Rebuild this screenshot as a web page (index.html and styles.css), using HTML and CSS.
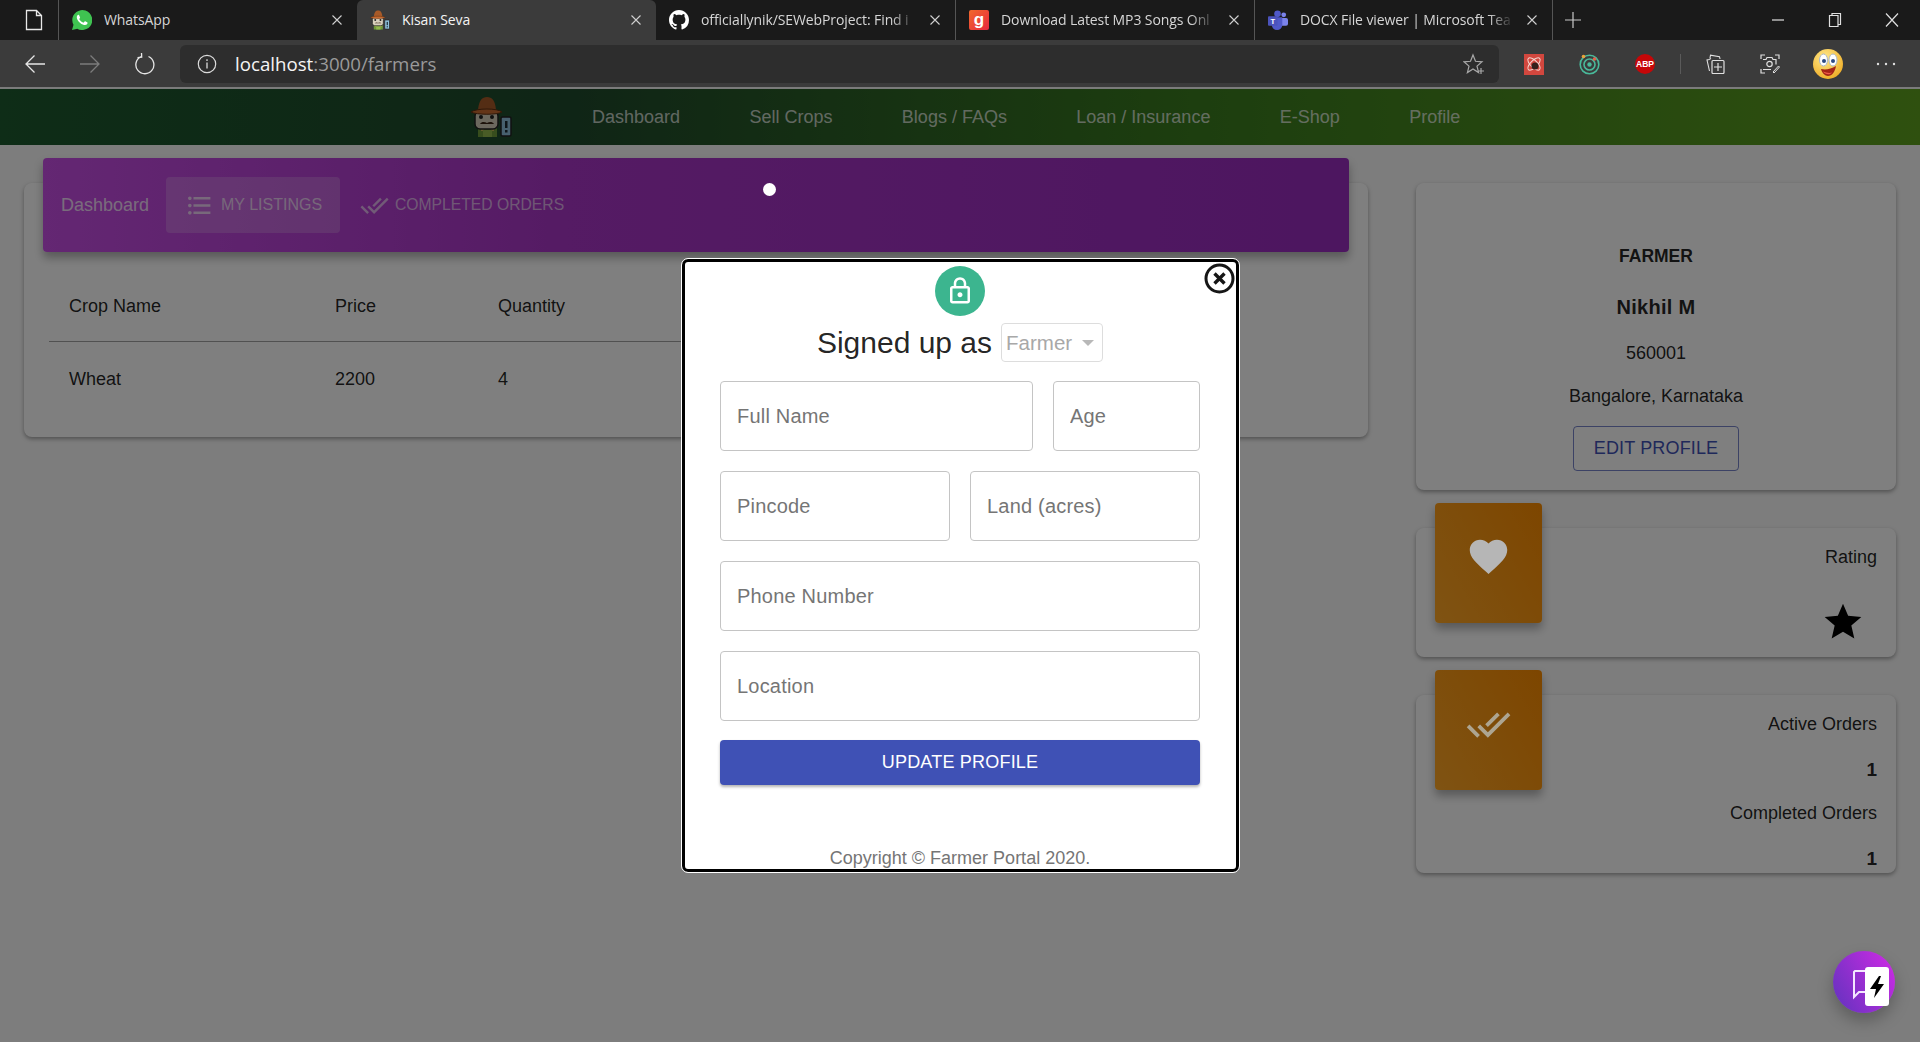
FILE: index.html
```html
<!DOCTYPE html>
<html lang="en">
<head>
    <meta charset="UTF-8">
    <meta name="viewport" content="width=device-width, initial-scale=1.0">
    <title>Kisan Seva</title>
    <link rel="stylesheet" href="styles.css">
</head>
<body>
    <svg class="defs" width="0" height="0">
        <symbol id="farmer" viewBox="0 0 42 40">
            <rect x="8" y="29" width="19" height="11" fill="#6f9a3a"/>
            <rect x="11" y="30" width="3" height="4" fill="#c9b458"/>
            <rect x="21" y="30" width="3" height="4" fill="#c9b458"/>
            <rect x="13" y="33" width="9" height="7" fill="#93b84d"/>
            <rect x="5" y="14" width="23" height="18" rx="5" fill="#d8d0bd" stroke="#222" stroke-width="1.5"/>
            <circle cx="11" cy="20" r="2" fill="#222"/>
            <circle cx="22" cy="20" r="2" fill="#222"/>
            <path d="M10 27c2-3 5-2 7-1 2-1 5-2 7 1z" fill="#3a2414"/>
            <path d="M8 13C9 3 12 0 17 0s8 3 9 13z" fill="#a85a28"/>
            <path d="M1 15c5-4 27-4 31 0-4 3-26 3-31 0z" fill="#c86a30" stroke="#5c2f12"/>
            <rect x="31" y="20" width="10" height="19" rx="1.5" fill="#8fc1dc" stroke="#222" stroke-width="1.5"/>
            <rect x="35" y="24" width="2.5" height="7" fill="#1c2a33"/>
            <rect x="35" y="33" width="2.5" height="2.5" fill="#1c2a33"/>
        </symbol>
        <symbol id="close-x" viewBox="0 0 12 12">
            <path d="M1.5 1.5l9 9M10.5 1.5l-9 9" stroke="#d0d0d0" stroke-width="1.1" fill="none"/>
        </symbol>
        <symbol id="done-all" viewBox="0 0 24 24">
            <path d="M18 7l-1.41-1.41-6.34 6.34 1.41 1.41L18 7zm4.24-1.41L11.66 16.17 7.48 12l-1.41 1.41L11.66 19l12-12-1.42-1.41zM.41 13.41L6 19l1.41-1.41L1.83 12 .41 13.41z"/>
        </symbol>
    </svg>

    <div class="tabstrip">
        <div class="tab-actions">
            <svg width="18" height="22" viewBox="0 0 18 22"><path d="M1.5 1.5h10l5 5v14h-15zM11.5 1.5v5h5" fill="none" stroke="#e8e8e8" stroke-width="1.3"/></svg>
        </div>
        <div class="tab tab-first">
            <svg class="favicon" viewBox="0 0 20 20">
                <path d="M0 20l1.5-5.2A10 10 0 1 1 5.3 18.7z" fill="#3fc351"/>
                <path d="M6.6 4.8c-.4 0-1 .2-1.3.8-.6 1-.8 2.500.3 4.300 1.200 1.900 3 3.900 5.700 4.900 1.800.6 3.200.2 3.900-.8.400-.6.400-1.300.3-1.500l-2.200-1.200c-.3-.1-.5 0-.7.2l-.8 1c-.2.200-.4.200-.7.100-1.500-.6-3-1.900-3.800-3.300-.1-.3-.1-.4.100-.6l.6-.8c.1-.2.100-.4 0-.6l-1-2.300c-.1-.2-.3-.2-.4-.2z" fill="#fff"/>
            </svg>
            <span class="tab-title">WhatsApp</span>
            <svg class="tab-close"><use href="#close-x"/></svg>
        </div>
        <div class="tab tab-active">
            <svg class="favicon"><use href="#farmer"/></svg>
            <span class="tab-title">Kisan Seva</span>
            <svg class="tab-close"><use href="#close-x"/></svg>
        </div>
        <div class="tab">
            <svg class="favicon" viewBox="0 0 16 16"><path fill="#fff" d="M8 0C3.58 0 0 3.58 0 8c0 3.54 2.29 6.53 5.47 7.59.4.07.55-.17.55-.38 0-.19-.01-.82-.01-1.49-2.01.37-2.53-.49-2.69-.94-.09-.23-.48-.94-.82-1.13-.28-.15-.68-.52-.01-.53.63-.01 1.08.58 1.23.82.72 1.21 1.87.87 2.33.66.07-.52.28-.87.51-1.07-1.78-.2-3.64-.89-3.64-3.95 0-.87.31-1.59.82-2.15-.08-.2-.36-1.02.08-2.12 0 0 .67-.21 2.2.82.64-.18 1.32-.27 2-.27.68 0 1.36.09 2 .27 1.53-1.04 2.2-.82 2.2-.82.44 1.1.16 1.92.08 2.12.51.56.82 1.27.82 2.15 0 3.07-1.87 3.75-3.65 3.95.29.25.54.73.54 1.48 0 1.07-.01 1.93-.01 2.2 0 .21.15.46.55.38A8.013 8.013 0 0016 8c0-4.42-3.58-8-8-8z"/></svg>
            <span class="tab-title tab-fade">officiallynik/SEWebProject: Find i</span>
            <svg class="tab-close"><use href="#close-x"/></svg>
        </div>
        <div class="tab">
            <svg class="favicon" viewBox="0 0 20 20">
                <defs><linearGradient id="gaana" x1="0" y1="0" x2="1" y2="1"><stop offset="0" stop-color="#f0692c"/><stop offset="1" stop-color="#e8273f"/></linearGradient></defs>
                <rect width="20" height="20" rx="2" fill="url(#gaana)"/>
                <text x="10" y="15" text-anchor="middle" class="favicon-letter" fill="#fff">g</text>
            </svg>
            <span class="tab-title tab-fade">Download Latest MP3 Songs Onl</span>
            <svg class="tab-close"><use href="#close-x"/></svg>
        </div>
        <div class="tab tab-last">
            <svg class="favicon" viewBox="0 0 21 20">
                <circle cx="16.500" cy="4.500" r="2.500" fill="#7b83eb"/>
                <rect x="12" y="8" width="9" height="8" rx="2" fill="#7b83eb"/>
                <circle cx="10" cy="3.500" r="3.500" fill="#5059c9"/>
                <path d="M4 7h11v8a5 5 0 0 1-11 0z" fill="#5059c9"/>
                <rect x="0" y="6" width="10" height="10" rx="1" fill="#4b53bc"/>
                <text x="5" y="14" text-anchor="middle" class="favicon-t" fill="#fff">T</text>
            </svg>
            <span class="tab-title tab-fade">DOCX File viewer | Microsoft Tea</span>
            <svg class="tab-close"><use href="#close-x"/></svg>
        </div>
        <div class="new-tab">
            <svg width="18" height="18" viewBox="0 0 18 18"><path d="M9 1v16M1 9h16" stroke="#c8c8c8" stroke-width="1.2"/></svg>
        </div>
        <div class="window-btns">
            <svg width="14" height="14" viewBox="0 0 14 14"><path d="M1 7h12" stroke="#e0e0e0" stroke-width="1.2"/></svg>
            <svg width="14" height="16" viewBox="0 0 14 16"><path d="M1.500 3.500h8.500v11h-8.500zM4 3.500v-2h8.500v11h-2.500" fill="none" stroke="#e0e0e0" stroke-width="1.200"/></svg>
            <svg width="14" height="16" viewBox="0 0 14 16"><path d="M1 1.500l12 13M13 1.500l-12 13" stroke="#e0e0e0" stroke-width="1.200"/></svg>
        </div>
    </div>

    <div class="toolbar">
        <div class="nav-btns">
            <svg width="20" height="20" viewBox="0 0 20 20"><path d="M20 10H1M9.500 1.500L1 10l8.500 8.500" fill="none" stroke="#e6e6e6" stroke-width="1.300"/></svg>
            <svg width="20" height="20" viewBox="0 0 20 20"><path d="M0 10h19M10.500 1.500L19 10l-8.500 8.500" fill="none" stroke="#7c7c7c" stroke-width="1.300"/></svg>
            <svg width="20" height="22" viewBox="0 0 20 22"><path d="M13.500 3.500A9 9 0 1 1 6 3.600M6.500 0l.2 4.200-4.200.4" fill="none" stroke="#e6e6e6" stroke-width="1.300"/></svg>
        </div>
        <div class="addressbar">
            <svg width="20" height="20" viewBox="0 0 20 20"><circle cx="10" cy="10" r="8.700" fill="none" stroke="#dcdcdc" stroke-width="1.200"/><path d="M10 8.500v6M10 5.300v1.600" stroke="#dcdcdc" stroke-width="1.300"/></svg>
            <span class="url"><span class="url-host">localhost</span>:3000/farmers</span>
            <svg class="fav-star" width="22" height="22" viewBox="0 0 22 22"><path d="M10 2l2.500 6.300 6.500.5-5 4.300 1.600 6.500L10 16l-5.600 3.600L6 13.100 1 8.800l6.500-.5z" fill="none" stroke="#a8a8a8" stroke-width="1.200"/><path d="M18 15v6M15 18h6" stroke="#a8a8a8" stroke-width="1.200"/></svg>
        </div>
        <div class="extensions">
            <svg width="20" height="21" viewBox="0 0 20 21"><rect width="20" height="21" fill="#d2473e"/><ellipse cx="10" cy="10" rx="8" ry="3.500" fill="none" stroke="#f4d6d0" transform="rotate(45 10 10)"/><ellipse cx="10" cy="10" rx="8" ry="3.500" fill="none" stroke="#f4d6d0" transform="rotate(-45 10 10)"/><circle cx="11" cy="12" r="3.500" fill="#33201c"/></svg>
            <svg width="21" height="21" viewBox="0 0 21 21"><circle cx="10.500" cy="10.500" r="9.300" fill="none" stroke="#49b99a" stroke-width="1.600"/><circle cx="10.500" cy="10.500" r="5.500" fill="none" stroke="#49b99a" stroke-width="1.600"/><circle cx="10.500" cy="10.500" r="2.200" fill="#49b99a"/><circle cx="4.500" cy="2.500" r="1.800" fill="#e9a23b"/><circle cx="15.500" cy="5" r="1.800" fill="#e2604a"/></svg>
            <svg width="20" height="20" viewBox="0 0 20 20"><circle cx="10" cy="10" r="10" fill="#c60708"/><text x="10" y="13.300" text-anchor="middle" class="abp-text" fill="#fff">ABP</text></svg>
            <span class="ext-sep"></span>
            <svg width="19" height="20" viewBox="0 0 19 20"><path d="M5 4.500L3 5.500 1 6l2.500 11" fill="none" stroke="#e0e0e0" stroke-width="1.100"/><path d="M4 4l.5-2.800 9 1.500.5 2.300" fill="none" stroke="#e0e0e0" stroke-width="1.100"/><rect x="6" y="6.500" width="12" height="13" rx="1" fill="none" stroke="#e0e0e0" stroke-width="1.200"/><path d="M12 9v8M8 13h8" stroke="#e0e0e0" stroke-width="1.200"/></svg>
            <svg width="20" height="20" viewBox="0 0 20 20"><path d="M1 5V1h4M15 1h4v4M1 15v4h4" fill="none" stroke="#e0e0e0" stroke-width="1.200"/><path d="M3 5.500h3l1-2h5l1 2h3v5M11 15.500H3z" fill="none" stroke="#e0e0e0" stroke-width="1.200"/><circle cx="9.500" cy="10" r="2.700" fill="none" stroke="#e0e0e0" stroke-width="1.200"/><path d="M13 18l5.500-6 1 1-5.500 6z" fill="none" stroke="#e0e0e0" stroke-width="1"/></svg>
            <svg class="avatar-emoji" width="30" height="30" viewBox="0 0 30 30">
                <defs><radialGradient id="emoji" cx=".4" cy=".3" r=".8"><stop offset="0" stop-color="#ffe98a"/><stop offset="1" stop-color="#eda81e"/></radialGradient></defs>
                <circle cx="15" cy="15" r="15" fill="url(#emoji)"/>
                <ellipse cx="10.500" cy="11" rx="4" ry="6" fill="#fff" stroke="#a9b6c8"/>
                <ellipse cx="20" cy="11" rx="4" ry="6" fill="#fff" stroke="#a9b6c8"/>
                <circle cx="11" cy="12" r="2" fill="#2c4a84"/>
                <circle cx="20" cy="12" r="2" fill="#2c4a84"/>
                <path d="M8 20c5 1 10 0 15-3-1 6-4 10-8 10-3 0-6-3-7-7z" fill="#a42416"/>
                <path d="M10 22.500c2 3 7 4 9 1-3 1-6 0-9-1z" fill="#f05a4a"/>
            </svg>
            <svg width="20" height="4" viewBox="0 0 20 4"><circle cx="2" cy="2" r="1.200" fill="#e0e0e0"/><circle cx="10" cy="2" r="1.200" fill="#e0e0e0"/><circle cx="18" cy="2" r="1.200" fill="#e0e0e0"/></svg>
        </div>
    </div>

    <div class="page">
        <nav class="navbar">
            <svg class="nav-logo"><use href="#farmer"/></svg>
            <a>Dashboard</a>
            <a>Sell Crops</a>
            <a>Blogs / FAQs</a>
            <a>Loan / Insurance</a>
            <a>E-Shop</a>
            <a>Profile</a>
        </nav>

        <main class="content">
            <section class="card listings">
                <div class="appbar">
                    <span class="appbar-title">Dashboard</span>
                    <div class="appbar-tab appbar-tab-on">
                        <svg class="tab-icon" viewBox="0 0 24 24"><path d="M4 10.500c-.83 0-1.500.67-1.500 1.500s.67 1.500 1.500 1.500 1.500-.67 1.500-1.500-.67-1.500-1.500-1.500zm0-6c-.83 0-1.500.67-1.500 1.500S3.170 7.500 4 7.500 5.500 6.830 5.500 6 4.830 4.500 4 4.500zm0 12c-.83 0-1.500.68-1.500 1.500s.68 1.500 1.500 1.500 1.500-.68 1.500-1.500-.67-1.500-1.500-1.500zM7 19h14v-2H7v2zm0-6h14v-2H7v2zm0-8v2h14V5H7z"/></svg>
                        My Listings
                    </div>
                    <div class="appbar-tab">
                        <svg class="tab-icon"><use href="#done-all"/></svg>
                        Completed Orders
                    </div>
                </div>
                <table class="crops">
                    <thead>
                        <tr><th class="col-name">Crop Name</th><th class="col-price">Price</th><th>Quantity</th></tr>
                    </thead>
                    <tbody>
                        <tr><td>Wheat</td><td>2200</td><td>4</td></tr>
                    </tbody>
                </table>
            </section>

            <aside class="sidebar">
                <section class="card profile">
                    <h4 class="profile-role">FARMER</h4>
                    <h3 class="profile-name">Nikhil M</h3>
                    <p class="profile-line pin">560001</p>
                    <p class="profile-line place">Bangalore, Karnataka</p>
                    <button class="btn-outline">EDIT PROFILE</button>
                </section>
                <section class="card stat rating">
                    <div class="stat-box">
                        <svg class="heart" viewBox="0 0 24 24"><path d="M12 21.350l-1.450-1.320C5.400 15.360 2 12.280 2 8.500 2 5.420 4.420 3 7.500 3c1.740 0 3.410.81 4.500 2.090C13.090 3.810 14.760 3 16.500 3 19.580 3 22 5.420 22 8.500c0 3.780-3.400 6.860-8.550 11.540L12 21.350z"/></svg>
                    </div>
                    <p class="stat-label">Rating</p>
                    <svg class="star" viewBox="0 0 24 24"><polygon points="12,17.270 18.180,21 16.540,13.970 22,9.240 14.810,8.630 12,2 9.190,8.630 2,9.240 7.460,13.970 5.820,21"/></svg>
                </section>
                <section class="card stat orders">
                    <div class="stat-box">
                        <svg class="check"><use href="#done-all"/></svg>
                    </div>
                    <p class="stat-label">Active Orders</p>
                    <p class="stat-num">1</p>
                    <p class="stat-label stat-label-next">Completed Orders</p>
                    <p class="stat-num">1</p>
                </section>
            </aside>
        </main>

        <div class="overlay"></div>
        <div class="cursor-dot"></div>

        <div class="modal">
            <svg class="modal-close" viewBox="0 0 31 31"><circle cx="15.500" cy="15.500" r="13.500" fill="#fff" stroke="#161616" stroke-width="3"/><path d="M10.500 10.500l10 10M20.500 10.500l-10 10" stroke="#161616" stroke-width="3.400"/></svg>
            <div class="lock-avatar">
                <svg class="lock" viewBox="0 0 24 24"><path d="M18 8h-1V6c0-2.760-2.240-5-5-5S7 3.240 7 6v2H6c-1.100 0-2 .9-2 2v10c0 1.100.9 2 2 2h12c1.100 0 2-.9 2-2V10c0-1.100-.9-2-2-2zM9 6c0-1.660 1.340-3 3-3s3 1.340 3 3v2H9V6zm9 14H6V10h12v10zm-6-3c1.100 0 2-.9 2-2s-.9-2-2-2-2 .9-2 2 .9 2 2 2z"/></svg>
            </div>
            <div class="modal-title">
                <h2>Signed up as</h2>
                <div class="role-select">Farmer<span class="caret"></span></div>
            </div>
            <form class="signup">
                <div class="form-row row-name">
                    <input type="text" placeholder="Full Name">
                    <input type="text" placeholder="Age">
                </div>
                <div class="form-row row-even">
                    <input type="text" placeholder="Pincode">
                    <input type="text" placeholder="Land (acres)">
                </div>
                <input type="text" placeholder="Phone Number">
                <input type="text" placeholder="Location">
                <button type="button" class="btn-primary">UPDATE PROFILE</button>
            </form>
            <p class="copyright">Copyright © Farmer Portal 2020.</p>
        </div>

        <div class="fab">
            <svg width="62" height="62" viewBox="0 0 62 62">
                <path d="M22 20h16v21H26l-5 5V21z" fill="none" stroke="#f4e6ff" stroke-width="2"/>
                <rect x="32" y="16" width="24" height="39" rx="3" fill="#fff"/>
                <polygon points="46,25 37,38 43,38 41,47 51,33 45,33 48,25" fill="#000"/>
            </svg>
        </div>
    </div>
</body>
</html>
```

FILE: styles.css
```css
* {
    box-sizing: border-box;
}
html, body {
    margin: 0;
    height: 1042px;
    overflow: hidden;
}
body {
    font-family: "Liberation Sans", Arial, sans-serif;
    background-color: #1a1a1a;
}
.defs {
    display: block;
    height: 0;
}

/* browser chrome */
.tabstrip {
    display: flex;
    align-items: stretch;
    height: 40px;
    background-color: #1a1a1a;
    font-family: "Open Sans", sans-serif;
    font-size: 14px;
    letter-spacing: -0.1px;
    color: #d6d6d6;
}
.tab-actions {
    display: flex;
    align-items: center;
    width: 58px;
    padding-left: 25px;
}
.tab {
    display: flex;
    align-items: center;
    width: 299px;
    padding: 0 14px 0 13px;
    border-left: 1px solid #555;
    background-clip: padding-box;
}
.tab-first {
    border-left: 1px solid #555;
}
.tab-active {
    background-color: #3b3b3b;
    border-left: 0;
    border-radius: 6px 6px 0 0;
    color: #f4f4f4;
}
.tab-active + .tab {
    border-left: 0;
}
.tab-last {
    border-right: 1px solid #555;
}
.favicon {
    flex: none;
    width: 20px;
    height: 20px;
    margin-right: 12px;
}
.favicon-letter {
    font: bold 17px "Liberation Sans", sans-serif;
}
.favicon-t {
    font: bold 8px "Liberation Sans", sans-serif;
}
.tab-title {
    flex: 1;
    margin-bottom: 2px;
    overflow: hidden;
    white-space: nowrap;
}
.tab-fade {
    -webkit-mask-image: linear-gradient(90deg, #000 88%, transparent 100%);
    mask-image: linear-gradient(90deg, #000 88%, transparent 100%);
}
.tab-close {
    flex: none;
    width: 12px;
    height: 12px;
    margin-left: 12px;
}
.new-tab {
    display: flex;
    align-items: center;
    padding-left: 11px;
}
.window-btns {
    display: flex;
    align-items: center;
    gap: 43px;
    margin-left: auto;
    padding-right: 21px;
}

.toolbar {
    display: flex;
    align-items: center;
    height: 47px;
    padding-top: 5px;
    padding-bottom: 4px;
    background-color: #3b3b3b;
}
.nav-btns {
    display: flex;
    align-items: center;
    gap: 35px;
    width: 180px;
    padding-left: 25px;
}
.addressbar {
    display: flex;
    align-items: center;
    width: 1319px;
    height: 38px;
    padding: 0 14px 0 17px;
    border-radius: 6px;
    background-color: #2d2d2d;
}
.url {
    margin-left: 18px;
    margin-bottom: 2px;
    font-family: "Open Sans", sans-serif;
    font-size: 18.700px;
    color: #9a9a9a;
}
.url-host {
    color: #f5f5f5;
}
.fav-star {
    margin-left: auto;
}
.extensions {
    display: flex;
    align-items: center;
    gap: 35px;
    padding-left: 25px;
}
.ext-sep {
    width: 1px;
    height: 20px;
    margin: 0 -10px 0 -10px;
    background-color: #5a5a5a;
}
.avatar-emoji {
    margin: 0 -2px;
}
.abp-text {
    font: bold 8.500px "Liberation Sans", sans-serif;
}

/* page */
.page {
    position: relative;
    height: 955px;
    border-top: 2px solid #7b7b7b;
    background-color: #fafafa;
}
.navbar {
    display: flex;
    align-items: center;
    gap: 69.400px;
    height: 56px;
    padding-left: 470px;
    background: linear-gradient(90deg, #1c5a2e 0%, #1f4a2c 30%, #3a7c1e 62%, #5ea11e 100%);
    font-size: 18px;
    color: rgba(255, 255, 255, 0.74);
}
.nav-logo {
    width: 42px;
    height: 40px;
    margin-right: 10.600px;
}
.content {
    display: grid;
    grid-template-columns: 1344px 480px;
    gap: 48px;
    align-items: start;
    padding: 38px 24px 0;
}
.card {
    position: relative;
    border-radius: 8px;
    background-color: #fff;
    box-shadow: 0 2px 4px rgba(0, 0, 0, 0.35);
    color: rgba(0, 0, 0, 0.87);
}
.listings {
    height: 254px;
}
.appbar {
    display: flex;
    align-items: center;
    height: 94px;
    margin: 0 19px;
    padding-left: 18px;
    position: relative;
    top: -25px;
    border-radius: 4px;
    background: linear-gradient(90deg, #c84ee6 0%, #aa36c8 40%, #9a2cc0 100%);
    box-shadow: 0 6px 10px rgba(0, 0, 0, 0.3);
    font-size: 18px;
    color: rgba(255, 255, 255, 0.8);
}
.appbar-title {
    width: 105px;
}
.appbar-tab {
    display: flex;
    align-items: center;
    height: 56px;
    padding: 0 0 0 20px;
    border-radius: 4px;
    font-size: 15.700px;
    white-space: nowrap;
    text-transform: uppercase;
    color: rgba(255, 255, 255, 0.62);
    fill: rgba(255, 255, 255, 0.62);
}
.appbar-tab-on {
    width: 174px;
    padding-left: 19px;
    background-color: rgba(255, 255, 255, 0.2);
    font-size: 16px;
    color: rgba(255, 255, 255, 0.7);
    fill: rgba(255, 255, 255, 0.7);
}
.appbar-tab-on .tab-icon {
    margin-right: 7px;
}
.tab-icon {
    width: 29px;
    height: 29px;
    margin-right: 6px;
    flex: none;
}
.crops {
    position: relative;
    top: -5px;
    width: 1100px;
    margin: 0 25px;
    border-collapse: collapse;
    table-layout: fixed;
    font-size: 18px;
}
.crops th, .crops td {
    padding: 0 0 0 20px;
    font-weight: normal;
    text-align: left;
}
.crops th {
    height: 69px;
    padding-top: 1px;
    border-bottom: 1px solid rgba(0, 0, 0, 0.2);
}
.crops td {
    height: 77px;
}
.col-name {
    width: 266px;
}
.col-price {
    width: 163px;
}

.sidebar {
    display: flex;
    flex-direction: column;
    gap: 38px;
}
.profile {
    padding: 61px 0 19px;
    text-align: center;
}
.profile-role {
    margin: 0;
    font-size: 17.500px;
    line-height: 24px;
}
.profile-name {
    margin: 25px 0 0;
    font-size: 20px;
    line-height: 28px;
    letter-spacing: 0.3px;
}
.profile-line {
    margin: 0;
    font-size: 18px;
    line-height: 24px;
}
.pin {
    margin-top: 20px;
}
.place {
    margin-top: 19px;
}
.btn-outline {
    display: block;
    width: 166px;
    height: 45px;
    margin: 18px auto 0;
    border: 1px solid rgba(63, 81, 181, 0.7);
    border-radius: 4px;
    background: none;
    font: 18px "Liberation Sans", sans-serif;
    letter-spacing: 0.15px;
    color: #3f51b5;
}
.stat {
    display: flex;
    flex-direction: column;
    align-items: flex-end;
    padding-right: 19px;
    font-size: 18px;
}
.stat p {
    margin: 0;
    line-height: 24px;
}
.stat-box {
    position: absolute;
    left: 19px;
    top: -25px;
    display: flex;
    justify-content: center;
    width: 107px;
    height: 120px;
    border-radius: 4px;
    background: linear-gradient(60deg, #ffa726, #fb8c00);
    box-shadow: 0 6px 10px rgba(0, 0, 0, 0.3);
}
/* these two show lighter than the backdrop allows, so they sit above it */
.heart, .check {
    position: relative;
    z-index: 1;
    width: 45px;
    height: 45px;
    margin-top: 31px;
}
.heart {
    fill: #b6b6b6;
}
.check {
    margin-top: 32px;
    fill: #ada591;
}
.rating {
    padding-top: 17px;
    padding-bottom: 13px;
}
.star {
    width: 44px;
    height: 44px;
    margin: 31px 12px 0 0;
}
.orders {
    padding-top: 17px;
    padding-bottom: 2px;
}
.stat .stat-num {
    margin-top: 22px;
    font-size: 19px;
    font-weight: bold;
}
.stat .stat-label-next {
    margin-top: 19px;
}

/* dimmed backdrop and dialog */
.overlay {
    position: absolute;
    inset: 0;
    background-color: rgba(0, 0, 0, 0.5);
}
.cursor-dot {
    position: absolute;
    left: 763px;
    top: 94px;
    width: 13px;
    height: 13px;
    border-radius: 50%;
    background-color: #fff;
}
.modal {
    position: absolute;
    left: 682px;
    top: 170px;
    width: 557px;
    height: 613px;
    padding: 4px 36px 0 35px;
    overflow: hidden;
    border: 3px solid #000;
    border-radius: 6px;
    outline: 1px solid #fff;
    background-color: #fff;
}
.modal-close {
    position: absolute;
    right: 1px;
    top: 1px;
    width: 31px;
    height: 31px;
}
.lock-avatar {
    display: flex;
    align-items: center;
    justify-content: center;
    width: 50px;
    height: 50px;
    margin: 0 auto;
    border-radius: 50%;
    background-color: #3cb58f;
}
.lock {
    width: 30px;
    height: 30px;
    fill: #fff;
}
.modal-title {
    display: flex;
    align-items: center;
    justify-content: center;
    gap: 9px;
    height: 39px;
    margin-top: 7px;
}
.modal-title h2 {
    margin: 0;
    font-size: 30px;
    font-weight: normal;
    color: rgba(0, 0, 0, 0.87);
}
.role-select {
    display: flex;
    align-items: center;
    width: 102px;
    height: 39px;
    padding-left: 4px;
    border: 1px solid #ddd;
    border-radius: 4px;
    font-size: 20.500px;
    color: #a8a8a8;
}
.caret {
    width: 0;
    height: 0;
    margin-left: 10px;
    border-top: 6px solid #b8b8b8;
    border-left: 6px solid transparent;
    border-right: 6px solid transparent;
}
.signup {
    display: flex;
    flex-direction: column;
    gap: 20px;
    margin-top: 19px;
}
.form-row {
    display: grid;
    gap: 20px;
}
.row-name {
    grid-template-columns: 1fr 147px;
}
.row-even {
    grid-template-columns: 1fr 1fr;
}
.signup input {
    width: 100%;
    height: 70px;
    padding: 0 16px;
    border: 1px solid #c4c4c4;
    border-radius: 4px;
    outline: none;
    font: 20px "Liberation Sans", sans-serif;
    letter-spacing: 0.2px;
}
.signup input::placeholder {
    color: #757575;
    opacity: 1;
}
.btn-primary {
    height: 45px;
    margin-top: -1px;
    border: none;
    border-radius: 4px;
    background-color: #3f51b5;
    box-shadow: 0 2px 3px rgba(0, 0, 0, 0.3);
    font: 18px "Liberation Sans", sans-serif;
    letter-spacing: 0.2px;
    color: #fff;
}
.copyright {
    margin: 63px 0 0;
    font-size: 18px;
    line-height: 21px;
    text-align: center;
    color: #757575;
}
.fab {
    position: absolute;
    left: 1833px;
    top: 862px;
    width: 62px;
    height: 62px;
    border-radius: 50%;
    background: linear-gradient(60deg, #5f33bd, #d22ae6);
    box-shadow: 0 8px 16px rgba(0, 0, 0, 0.25);
}
```
